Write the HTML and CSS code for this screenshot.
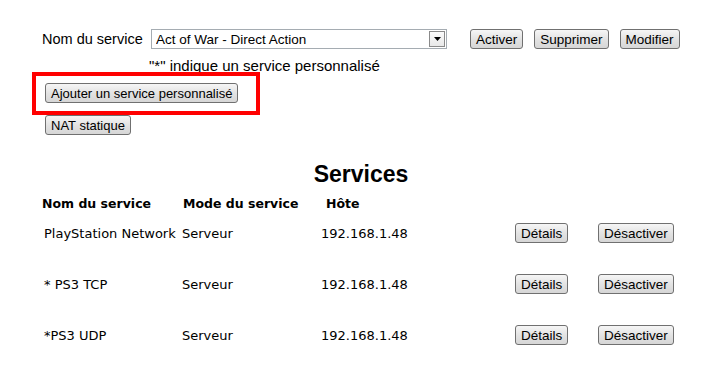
FILE: index.html
```html
<!DOCTYPE html>
<html>
<head>
    <title>Services</title>
    <link rel="stylesheet" href="styles.css">
</head>
<body>
    <div class="page">
        <div class="service-bar">
            <label class="label" for="serviceName">Nom du service</label>
            <div class="select-wrap">
                <select id="serviceName" class="select">
                    <option>Act of War - Direct Action</option>
                </select>
                <span class="arrow"><svg width="7" height="4" viewBox="0 0 7 4"><path d="M0 0h7L3.5 4z" fill="#000"/></svg></span>
            </div>
            <button class="btn">Activer</button>
            <button class="btn">Supprimer</button>
            <button class="btn">Modifier</button>
        </div>
        <p class="note">"*" indique un service personnalisé</p>
        <div class="actions">
            <button class="btn small">Ajouter un service personnalisé</button>
            <button class="btn small">NAT statique</button>
            <div class="highlight"></div>
        </div>

        <h2>Services</h2>

        <div class="services">
            <div class="row head">
                <span>Nom du service</span>
                <span>Mode du service</span>
                <span class="ip">Hôte</span>
            </div>
            <div class="row">
                <span>PlayStation Network</span>
                <span>Serveur</span>
                <span class="ip">192.168.1.48</span>
                <button class="btn">Détails</button>
                <button class="btn">Désactiver</button>
            </div>
            <div class="row">
                <span>* PS3 TCP</span>
                <span>Serveur</span>
                <span class="ip">192.168.1.48</span>
                <button class="btn">Détails</button>
                <button class="btn">Désactiver</button>
            </div>
            <div class="row">
                <span>*PS3 UDP</span>
                <span>Serveur</span>
                <span class="ip">192.168.1.48</span>
                <button class="btn">Détails</button>
                <button class="btn">Désactiver</button>
            </div>
        </div>
    </div>
</body>
</html>
```

FILE: styles.css
```css
body {
    margin: 0;
    background-color: #fff;
    color: #000;
    font-family: "Liberation Sans", Arial, sans-serif;
}

.page {
    position: relative;
    padding: 29px 0 0 42px;
}

.btn {
    font-family: "Liberation Sans", Arial, sans-serif;
    font-size: 13.5px;
    color: #000;
    height: 20px;
    padding: 0 5px;
    border: 1px solid #707070;
    border-radius: 3px;
    background: linear-gradient(#f6f6f6, #e3e3e3 50%, #d6d6d6);
    line-height: 17px;
    margin: 0;
}
.btn.small {
    font-size: 13px;
}

.service-bar {
    display: flex;
    align-items: center;
    height: 20px;
}
.label {
    font-size: 14.5px;
    width: 109px;
}
.select-wrap {
    position: relative;
    width: 296px;
    height: 20px;
    margin-right: 23px;
}
.select {
    appearance: none;
    -webkit-appearance: none;
    width: 100%;
    height: 20px;
    border: 1px solid #a5acb2;
    border-radius: 0;
    background: #fff;
    font-family: "Liberation Sans", Arial, sans-serif;
    font-size: 13.5px;
    padding: 0 0 0 4px;
    color: #000;
}
.arrow {
    position: absolute;
    right: 2px;
    top: 2px;
    width: 14px;
    height: 14px;
    border: 1px solid #8a8a8a;
    background: linear-gradient(#fbfbfb, #e8e8e8);
    display: flex;
    align-items: center;
    justify-content: center;
}
.service-bar .btn {
    margin-right: 11px;
}

.note {
    font-size: 15px;
    margin: 9px 0 0 107px;
    line-height: 16px;
}

.actions {
    display: flex;
    flex-direction: column;
    align-items: flex-start;
    gap: 12px;
    margin: 9px 0 0 3px;
}

.highlight {
    position: absolute;
    left: 32px;
    top: 72px;
    width: 228px;
    height: 43px;
    box-sizing: border-box;
    border: 4px solid #f00;
}

h2 {
    margin: 27px 0 0 -42px;
    text-align: center;
    font-size: 23px;
    line-height: 24px;
}

.services {
    margin-top: 7px;
    font-family: "DejaVu Sans", Verdana, sans-serif;
    font-size: 13px;
}
.row {
    display: grid;
    grid-template-columns: 138px 139px 194px 83px auto;
    align-items: center;
    justify-items: start;
    height: 20px;
    margin: 0 0 31px 2px;
}
.row.head {
    font-weight: bold;
    font-size: 12.5px;
    margin: 0 0 10px 0;
    grid-template-columns: 141px 143px auto;
}
```
